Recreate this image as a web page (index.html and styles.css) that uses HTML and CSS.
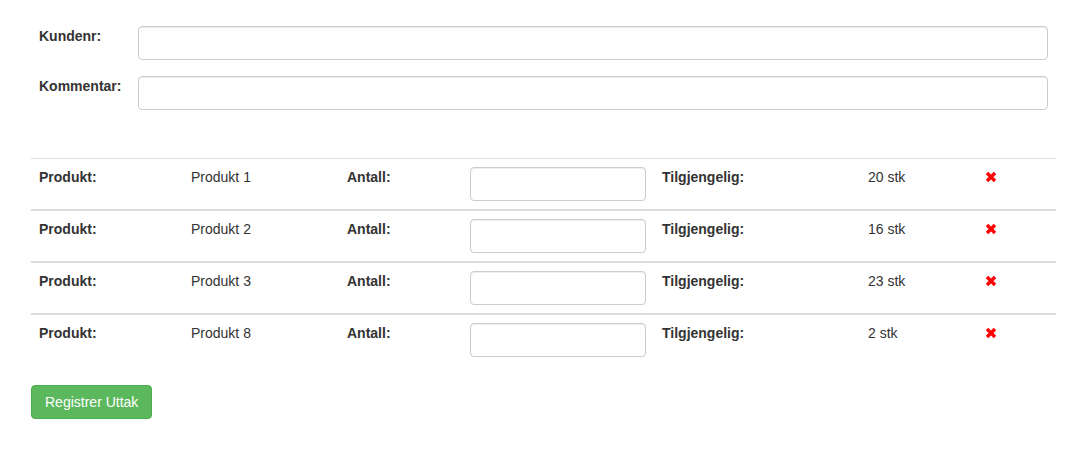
FILE: index.html
```html
<!DOCTYPE html>
<html lang="no">
<head>
<meta charset="utf-8">
<title>Registrer Uttak</title>
<link rel="stylesheet" href="styles.css">
</head>
<body>
<div class="page">
  <form class="customer-form">
    <label class="form-label" for="kundenr">Kundenr:</label>
    <input class="form-control" id="kundenr" type="text">
    <label class="form-label" for="kommentar">Kommentar:</label>
    <input class="form-control" id="kommentar" type="text">
  </form>

  <table class="product-table">
    <colgroup>
      <col class="c1"><col class="c2"><col class="c3"><col class="c4"><col class="c5"><col class="c6"><col class="c7">
    </colgroup>
    <tbody>
      <tr>
        <th>Produkt:</th><td>Produkt 1</td><th>Antall:</th><td><input class="form-control" type="text"></td>
        <th>Tilgjengelig:</th><td>20 stk</td><td><span class="remove"><svg viewBox="0 0 12 12" width="12" height="12"><path d="M2 2 L10 10 M10 2 L2 10"/></svg></span></td>
      </tr>
      <tr>
        <th>Produkt:</th><td>Produkt 2</td><th>Antall:</th><td><input class="form-control" type="text"></td>
        <th>Tilgjengelig:</th><td>16 stk</td><td><span class="remove"><svg viewBox="0 0 12 12" width="12" height="12"><path d="M2 2 L10 10 M10 2 L2 10"/></svg></span></td>
      </tr>
      <tr>
        <th>Produkt:</th><td>Produkt 3</td><th>Antall:</th><td><input class="form-control" type="text"></td>
        <th>Tilgjengelig:</th><td>23 stk</td><td><span class="remove"><svg viewBox="0 0 12 12" width="12" height="12"><path d="M2 2 L10 10 M10 2 L2 10"/></svg></span></td>
      </tr>
      <tr>
        <th>Produkt:</th><td>Produkt 8</td><th>Antall:</th><td><input class="form-control" type="text"></td>
        <th>Tilgjengelig:</th><td>2 stk</td><td><span class="remove"><svg viewBox="0 0 12 12" width="12" height="12"><path d="M2 2 L10 10 M10 2 L2 10"/></svg></span></td>
      </tr>
    </tbody>
  </table>

  <button class="btn-success" type="button">Registrer Uttak</button>
</div>
</body>
</html>
```

FILE: styles.css
```css
* { box-sizing: border-box; }
html, body { margin: 0; padding: 0; background: #fff; }
body {
  font-family: "Liberation Sans", Arial, Helvetica, sans-serif;
  font-size: 14px;
  line-height: 20px;
  color: #333;
}
.page {
  padding: 26px 31px 0 31px;
}
.customer-form {
  display: grid;
  grid-template-columns: 99px 1fr;
  row-gap: 16px;
  padding: 0 8px;
  margin-bottom: 48px;
}
.form-label {
  font-weight: bold;
}
.form-control {
  display: block;
  width: 100%;
  height: 34px;
  padding: 6px 12px;
  font: inherit;
  color: #555;
  background: #fff;
  border: 1px solid #ccc;
  border-radius: 4px;
  box-shadow: inset 0 1px 1px rgba(0,0,0,.075);
}
.product-table {
  width: 100%;
  table-layout: fixed;
  border-collapse: collapse;
  border-spacing: 0;
  margin-bottom: 20px;
}
.c1 { width: 152px; }
.c2 { width: 156px; }
.c3 { width: 123px; }
.c4 { width: 192px; }
.c5 { width: 206px; }
.c6 { width: 117px; }
.c7 { width: 79px; }
.product-table th,
.product-table td {
  padding: 8px;
  text-align: left;
  vertical-align: top;
  border-top: 2px solid #ddd;
}
.product-table tr:first-child th,
.product-table tr:first-child td {
  border-top-width: 1px;
}
.product-table th { font-weight: bold; }
.remove {
  display: inline-block;
  padding-top: 4px;
  line-height: 0;
}
.remove svg {
  display: block;
  width: 12px;
  height: 12px;
}
.remove path {
  stroke: #f00;
  stroke-width: 3.4;
  fill: none;
}
.btn-success {
  display: inline-block;
  height: 34px;
  padding: 6px 13px;
  font: inherit;
  color: #fff;
  background: #5cb85c;
  border: 1px solid #4cae4c;
  border-radius: 4px;
  cursor: pointer;
}
```
